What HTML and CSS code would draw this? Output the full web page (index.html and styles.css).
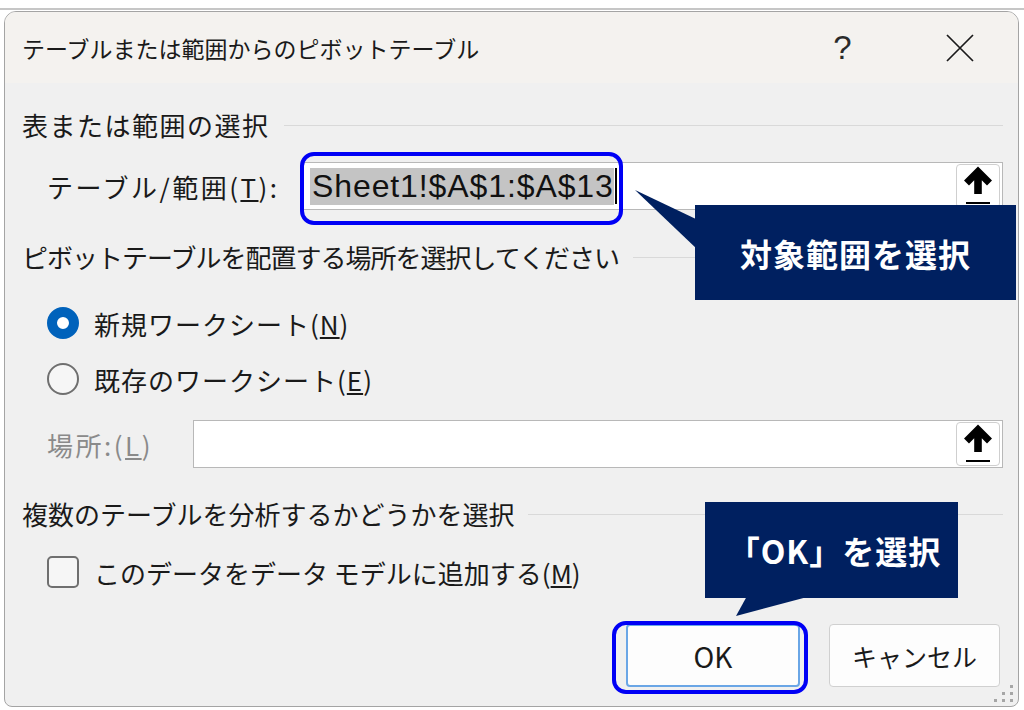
FILE: index.html
```html
<!DOCTYPE html>
<html lang="ja">
<head>
    <meta charset="UTF-8">
    <meta name="viewport" content="width=device-width, initial-scale=1.0">
    <title>テーブルまたは範囲からのピボットテーブル</title>
    <link rel="stylesheet" href="styles.css">
</head>
<body>
    <div class="stage">
        <div class="sheet-edge"></div>

        <div class="dialog">
            <div class="titlebar">
                <span class="title">テーブルまたは範囲からのピボットテーブル</span>
                <span class="tb-btn help">?</span>
                <span class="tb-btn close">
                    <svg width="28" height="28" viewBox="0 0 28 28"><path d="M1 1 L27 27 M27 1 L1 27" stroke="#1a1a1a" stroke-width="1.7" fill="none"/></svg>
                </span>
            </div>

            <div class="content">
                <div class="group-head head-source"><span>表または範囲の選択</span><i class="rule"></i></div>

                <div class="field range-row">
                    <label class="field-label range-label">テーブル/範囲(<u>T</u>):</label>
                    <div class="ref-box">
                        <span class="ref-value">Sheet1!$A$1:$A$13</span><span class="caret"></span>
                        <span class="collapse-btn">
                            <svg width="44" height="44" viewBox="0 0 44 44"><path d="M22 2.5 L36 16.5 L31 21.5 L25.8 16.3 V30 H18.2 V16.3 L13 21.5 L8 16.5 Z" fill="#000"/><rect x="10" y="38" width="24" height="2" fill="#000"/></svg>
                        </span>
                    </div>
                </div>

                <div class="group-head head-dest"><span>ピボットテーブルを配置する場所を選択してください</span><i class="rule"></i></div>

                <div class="option radio-opt opt-new">
                    <span class="radio checked"></span>
                    <span>新規ワークシート(<u>N</u>)</span>
                </div>
                <div class="option radio-opt opt-existing">
                    <span class="radio"></span>
                    <span>既存のワークシート(<u>E</u>)</span>
                </div>

                <div class="field loc-row">
                    <label class="field-label loc-label">場所:(<u>L</u>)</label>
                    <div class="ref-box">
                        <span class="collapse-btn">
                            <svg width="44" height="44" viewBox="0 0 44 44"><path d="M22 2.5 L36 16.5 L31 21.5 L25.8 16.3 V30 H18.2 V16.3 L13 21.5 L8 16.5 Z" fill="#000"/><rect x="10" y="38" width="24" height="2" fill="#000"/></svg>
                        </span>
                    </div>
                </div>

                <div class="group-head head-multi"><span>複数のテーブルを分析するかどうかを選択</span><i class="rule"></i></div>

                <div class="option opt-model">
                    <span class="checkbox"></span>
                    <span>このデータをデータ モデルに追加する(<u>M</u>)</span>
                </div>

                <div class="buttons">
                    <span class="btn btn-ok">OK</span>
                    <span class="btn btn-cancel">キャンセル</span>
                </div>
            </div>

            <svg class="grip" width="22" height="20" viewBox="0 0 22 20">
                <rect x="17" y="2" width="3" height="3"/>
                <rect x="9" y="9" width="3" height="3"/>
                <rect x="17" y="9" width="3" height="3"/>
                <rect x="1" y="16" width="3" height="3"/>
                <rect x="9" y="16" width="3" height="3"/>
                <rect x="17" y="16" width="3" height="3"/>
            </svg>
        </div>

        <!-- annotations drawn over the dialog -->
        <div class="mark mark-range"></div>
        <div class="mark mark-ok"></div>
        <svg class="pointers" width="1024" height="710" viewBox="0 0 1024 710">
            <polygon points="635,190 698,220 698,250" fill="#002060"/>
            <polygon points="747,596 811,596 736,616" fill="#002060"/>
        </svg>
        <div class="callout callout-range">対象範囲を選択</div>
        <div class="callout callout-ok">「OK」を選択</div>
    </div>
</body>
</html>
```

FILE: styles.css
```css
body {
    margin: 0;
    background-color: #fff;
    font-family: "Noto Sans CJK JP", sans-serif;
    color: #1a1a1a;
}
.stage {
    position: relative;
    width: 1024px;
    height: 710px;
    overflow: hidden;
}
.sheet-edge {
    height: 8px;
    border-bottom: 2px solid #c6c6c6;
}
.dialog {
    position: relative;
    box-sizing: border-box;
    width: 1015px;
    height: 696px;
    margin: 1px 0 0 4px;
    border: 1px solid #a4a4a4;
    border-radius: 12px 12px 8px 8px;
    background-color: #f0f0f0;
    overflow: hidden;
}
.titlebar {
    display: flex;
    align-items: center;
    height: 71px;
    padding-left: 17px;
    background-color: #f4f2ef;
}
.title {
    font-size: 23px;
    flex: 1;
}
.tb-btn {
    display: flex;
    align-items: center;
    justify-content: center;
    width: 117px;
    height: 71px;
}
.help {
    font-family: "Liberation Sans", sans-serif;
    font-size: 33px;
    color: #2a2a2a;
}
.content {
    padding: 0 15px 0 17px;
    font-size: 26px;
}
.group-head {
    display: flex;
    align-items: center;
    height: 28px;
    line-height: 28px;
}
.rule {
    flex: 1;
    height: 1px;
    margin-left: 14px;
    background-color: #d9d9d9;
}
.head-source {
    margin-top: 28px;
    letter-spacing: 1.5px;
}
.head-dest {
    margin-top: 33px;
    letter-spacing: -1px;
}
.head-multi { margin-top: 32px; }

.field {
    display: flex;
    align-items: center;
    height: 48px;
}
.range-row { margin-top: 23px; }
.loc-row { margin-top: 25px; }
.field-label {
    box-sizing: border-box;
    padding-left: 25px;
    letter-spacing: 2.5px;
}
.range-label { width: 281px; }
.loc-label {
    width: 171px;
    color: #8a8a8a;
}
.ref-box {
    flex: 1;
    display: flex;
    align-items: center;
    box-sizing: border-box;
    height: 48px;
    padding: 0 2px 0 6px;
    border: 1px solid #b8b8b8;
    background-color: #fff;
}
.ref-value {
    font-family: "Liberation Sans", sans-serif;
    font-size: 32px;
    letter-spacing: 0.9px;
    padding-left: 2px;
    background-color: #c4c4c4;
    color: #111;
}
.caret {
    width: 2px;
    height: 36px;
    margin-left: 1px;
    background-color: #000;
}
.collapse-btn {
    box-sizing: border-box;
    width: 44px;
    height: 44px;
    margin-left: auto;
    border: 1px solid #cfcfcf;
    border-radius: 4px;
    background-color: #fff;
}
.collapse-btn svg {
    display: block;
    margin: -1px;
}

.option {
    display: flex;
    align-items: center;
    gap: 15px;
    height: 32px;
    padding-left: 25px;
}
.radio-opt { letter-spacing: 1px; }
.opt-new { margin-top: 36px; }
.opt-existing { margin-top: 24px; }
.opt-model { margin-top: 28px; }
.radio {
    box-sizing: border-box;
    width: 32px;
    height: 32px;
    border: 2px solid #6f6f6f;
    border-radius: 50%;
    background-color: #f6f6f6;
}
.radio.checked {
    border: 10px solid #0062bb;
    background-color: #fff;
}
.checkbox {
    box-sizing: border-box;
    width: 32px;
    height: 32px;
    border: 2px solid #6f6f6f;
    border-radius: 5px;
    background-color: #f6f6f6;
}

.buttons {
    display: flex;
    justify-content: flex-end;
    gap: 29px;
    margin-top: 36px;
    padding-right: 3px;
}
.btn {
    display: flex;
    align-items: center;
    justify-content: center;
    box-sizing: border-box;
    height: 63px;
    border-radius: 4px;
    background-color: #fdfdfd;
}
.btn-ok {
    width: 174px;
    border: 2px solid #6aa6e6;
    font-size: 28px;
}
.btn-cancel {
    width: 171px;
    border: 1px solid #d0d0d0;
    font-size: 25px;
}
.grip {
    position: absolute;
    right: 3px;
    bottom: 3px;
    fill: #a6a6a6;
}

.mark {
    position: absolute;
    box-sizing: border-box;
    border: 4px solid #0000f5;
    border-radius: 14px;
}
.mark-range {
    left: 300px;
    top: 152px;
    width: 323px;
    height: 73px;
}
.mark-ok {
    left: 612px;
    top: 621px;
    width: 196px;
    height: 73px;
}
.pointers {
    position: absolute;
    left: 0;
    top: 0;
}
.callout {
    position: absolute;
    display: flex;
    align-items: center;
    justify-content: center;
    background-color: #002060;
    color: #fff;
    font-weight: bold;
    font-size: 32px;
    letter-spacing: 1px;
}
.callout-range {
    left: 695px;
    top: 205px;
    width: 321px;
    height: 95px;
}
.callout-ok {
    left: 705px;
    top: 502px;
    width: 253px;
    height: 96px;
    padding-left: 6px;
    box-sizing: border-box;
}
```
